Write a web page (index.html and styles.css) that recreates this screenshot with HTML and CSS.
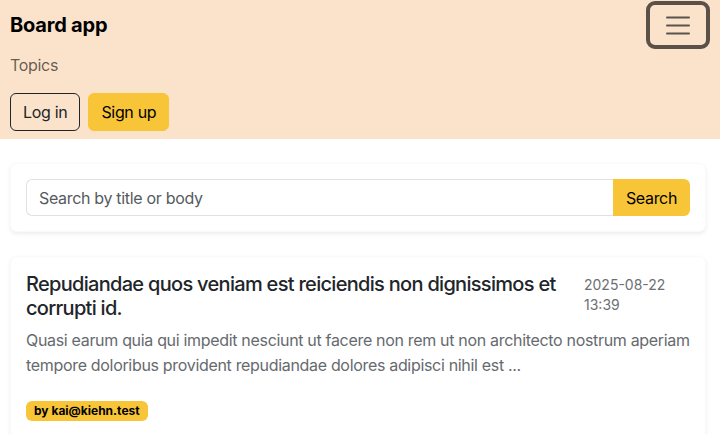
FILE: index.html
```html
<!DOCTYPE html>
<html lang="en">
<head>
<meta charset="utf-8">
<title>Board app</title>
<link rel="stylesheet" href="styles.css">
</head>
<body>
<nav class="navbar">
  <div class="nav-top">
    <a class="brand" href="#">Board app</a>
    <button class="toggler" type="button" aria-label="Toggle navigation">
      <svg width="30" height="30" viewBox="0 0 30 30"><path d="M4 7.5h22M4 15.5h22M4 23.5h22" stroke="#5b544e" stroke-width="2" stroke-linecap="round"/></svg>
    </button>
  </div>
  <div class="nav-links">
    <a class="nav-link" href="#">Topics</a>
  </div>
  <div class="nav-actions">
    <a class="btn btn-outline" href="#">Log in</a>
    <a class="btn btn-yellow" href="#">Sign up</a>
  </div>
</nav>
<main class="main">
  <section class="card search-card">
    <form class="search-group">
      <input class="search-input" type="text" placeholder="Search by title or body">
      <button class="search-btn" type="button">Search</button>
    </form>
  </section>
  <article class="card post">
    <div class="post-head">
      <h2 class="post-title">Repudiandae quos veniam est reiciendis non dignissimos et corrupti id.</h2>
      <div class="post-date">2025-08-22<br>13:39</div>
    </div>
    <p class="post-body">Quasi earum quia qui impedit nesciunt ut facere non rem ut non architecto nostrum aperiam tempore doloribus provident repudiandae dolores adipisci nihil est ...</p>
    <span class="badge">by kai@kiehn.test</span>
  </article>
</main>
</body>
</html>
```

FILE: styles.css
```css
* { box-sizing: border-box; }
html, body { margin: 0; padding: 0; }
body {
  font-family: Inter, "Noto Sans", "Liberation Sans", sans-serif;
  font-size: 16px;
  line-height: 1.5;
  letter-spacing: -0.02em;
  color: #212529;
  background: #fff;
  width: 720px;
  height: 434px;
  overflow: hidden;
}
.navbar {
  background: #fbe3cb;
  padding: 5px 14px 8px 10px;
}
.nav-top {
  display: flex;
  align-items: center;
  justify-content: space-between;
  height: 40px;
}
.brand {
  font-size: 20px;
  font-weight: 700;
  color: #000;
  text-decoration: none;
  line-height: 30px;
  letter-spacing: -0.2px;
}
.toggler {
  width: 64px;
  height: 48px;
  margin-right: -4px;
  border: 4px solid #5b5148;
  border-radius: 9px;
  background: transparent;
  display: flex;
  align-items: center;
  justify-content: center;
  padding: 0;
}
.toggler svg { display: block; }
.nav-links { padding: 8px 0; }
.nav-link {
  display: block;
  color: rgba(0,0,0,0.62);
  text-decoration: none;
  line-height: 24px;
}
.nav-actions {
  display: flex;
  gap: 8px;
  margin-top: 8px;
}
.btn {
  display: inline-block;
  padding: 6px 12px;
  line-height: 24px;
  border-radius: 6px;
  text-decoration: none;
  color: #000;
  font-size: 16px;
}
.btn-outline { border: 1px solid #212529; color: #212529; }
.btn-yellow { background: #f8c538; border: 1px solid #f8c538; }
.main {
  padding: 24px 14px 0 10px;
  display: flex;
  flex-direction: column;
  gap: 24px;
}
.card {
  background: #fff;
  border-radius: 7px;
  box-shadow: 0 2px 4px rgba(0,0,0,0.075);
  border: 1px solid rgba(0,0,0,0.02);
  padding: 15px;
}
.search-group { display: flex; margin: 0; }
.search-input {
  flex: 1;
  height: 37px;
  border: 1px solid #dee2e6;
  border-right: 0;
  border-radius: 6px 0 0 6px;
  padding: 6px 12px;
  font: inherit;
  letter-spacing: inherit;
  color: #212529;
  outline: none;
}
.search-input::placeholder { color: #555a60; }
.search-btn {
  height: 37px;
  width: 77px;
  background: #f8c538;
  border: 0;
  border-radius: 0 6px 6px 0;
  padding: 0;
  font: inherit;
  letter-spacing: inherit;
  color: #000;
}
.post { padding-bottom: 16px; }
.post-head {
  display: flex;
  justify-content: space-between;
  gap: 14px;
}
.post-title {
  margin: 0;
  font-size: 20px;
  font-weight: 500;
  line-height: 24px;
  letter-spacing: -0.7px;
  color: #212529;
  flex: 1;
}
.post-date {
  font-size: 14px;
  line-height: 20px;
  color: #6c6f73;
  width: 106px;
  flex: none;
  padding-top: 3px;
  letter-spacing: 0;
}
.post-body {
  margin: 8px 0 20px;
  color: #666a6e;
  line-height: 24.5px;
}
.badge {
  display: inline-block;
  background: #f8c538;
  color: #000;
  font-size: 12px;
  font-weight: 700;
  line-height: 12px;
  padding: 4px 8px;
  border-radius: 6px;
  letter-spacing: 0;
}
```
